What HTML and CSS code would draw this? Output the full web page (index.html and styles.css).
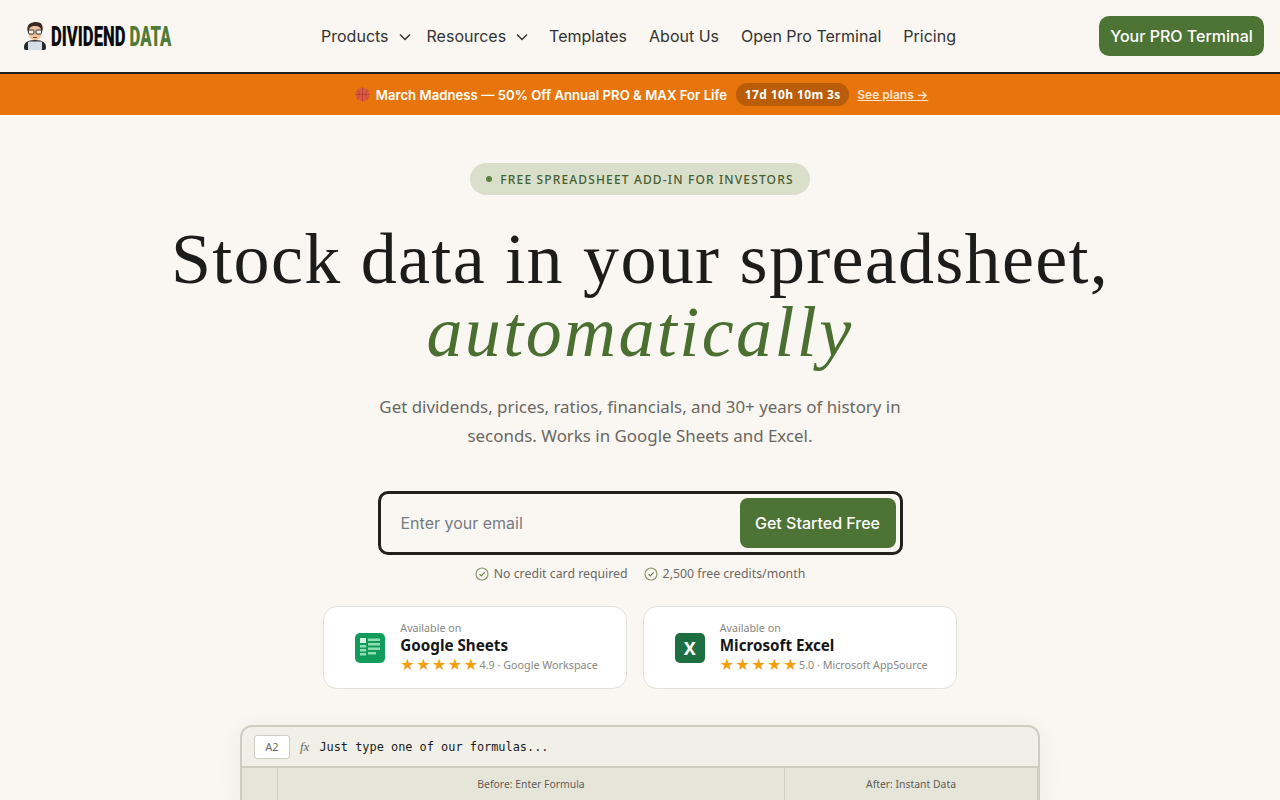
FILE: index.html
```html
<!DOCTYPE html>
<html lang="en">
<head>
    <meta charset="UTF-8">
    <meta name="viewport" content="width=device-width, initial-scale=1.0">
    <title>Dividend Data</title>
    <link rel="stylesheet" href="styles.css">
</head>
<body>
    <header class="site-header">
        <a class="logo" href="#">
            <svg class="logo-mark" viewBox="0 0 22 30" width="22" height="30">
                <path d="M2 29c-2 0-2-1-2-3 0-4 3-7 11-7s11 3 11 7c0 2 0 3-2 3z" fill="#2a2a2a"/>
                <path d="M4 5c1-4 12-6 14-1 1 2 1 5 0 7H4C3 9 3 7 4 5z" fill="#3a2a20"/>
                <path d="M5 9c0-2 2-4 6-4s6 2 6 4v5c0 3-3 5-6 5s-6-2-6-5z" fill="#eec39a"/>
                <rect x="4.5" y="9" width="5.5" height="4" rx="1" fill="#f4f1ea" stroke="#333"/>
                <rect x="12" y="9" width="5.5" height="4" rx="1" fill="#f4f1ea" stroke="#333"/>
                <path d="M9 16.5h4" stroke="#7a4a30"/>
                <rect x="4" y="20.5" width="14" height="8.5" rx="1" fill="#d5dde6"/>
            </svg>
            <span class="logo-text">DIVIDEND <em>DATA</em></span>
        </a>
        <nav class="main-nav">
            <a href="#" class="has-caret">Products
                <svg viewBox="0 0 12 8" width="12" height="8"><path d="M1 1.5l5 5 5-5" fill="none" stroke="#333" stroke-width="1.5"/></svg>
            </a>
            <a href="#" class="has-caret">Resources
                <svg viewBox="0 0 12 8" width="12" height="8"><path d="M1 1.5l5 5 5-5" fill="none" stroke="#333" stroke-width="1.5"/></svg>
            </a>
            <a href="#">Templates</a>
            <a href="#">About Us</a>
            <a href="#">Open Pro Terminal</a>
            <a href="#">Pricing</a>
        </nav>
        <a class="pro-btn" href="#">Your PRO Terminal</a>
    </header>

    <div class="promo-bar">
        <svg class="promo-ball" viewBox="0 0 16 16" width="15" height="15">
            <circle cx="8" cy="8" r="7.5" fill="#dc5a40"/>
            <path d="M.5 8h15M8 .5v15M2.5 3c3 2 3 8 0 10M13.500 3c-3 2-3 8 0 10" fill="none" stroke="#a83a2a" stroke-width=".7"/>
        </svg>
        <span class="promo-text">March Madness — 50% Off Annual PRO &amp; MAX For Life</span>
        <span class="promo-timer">17d 10h 10m 3s</span>
        <a class="promo-link" href="#">See plans →</a>
    </div>

    <main class="hero">
        <div class="eyebrow"><i></i>FREE SPREADSHEET ADD-IN FOR INVESTORS</div>
        <h1>Stock data in your spreadsheet,<br><em>automatically</em></h1>
        <p class="lead">Get dividends, prices, ratios, financials, and 30+ years of history in seconds. Works in Google Sheets and Excel.</p>

        <form class="signup">
            <input type="email" placeholder="Enter your email" autocomplete="off"/>
            <button type="button">Get Started Free</button>
        </form>

        <div class="perks">
            <span>
                <svg viewBox="0 0 14 14" width="14" height="14"><circle cx="7" cy="7" r="6" fill="none" stroke="#8a9a6a" stroke-width="1.2"/><path d="M4.5 7.2l1.8 1.8 3.3-3.6" fill="none" stroke="#6b7d4a" stroke-width="1.2"/></svg>
                No credit card required
            </span>
            <span>
                <svg viewBox="0 0 14 14" width="14" height="14"><circle cx="7" cy="7" r="6" fill="none" stroke="#8a9a6a" stroke-width="1.2"/><path d="M4.5 7.2l1.8 1.8 3.3-3.6" fill="none" stroke="#6b7d4a" stroke-width="1.2"/></svg>
                2,500 free credits/month
            </span>
        </div>

        <div class="platforms">
            <a class="platform sheets" href="#">
                <svg class="platform-icon" viewBox="0 0 30 30" width="30" height="30">
                    <rect width="30" height="30" rx="5" fill="#119c5c"/>
                    <rect x="5" y="5" width="6" height="5" fill="#d8f3e3"/>
                    <path d="M5 12h6v2.5H5zM5 16h6v2.5H5zM5 20h6v2.5H5zM13 5.5h12V8H13zM13 10h12v2.5H13zM13 14.5h12V17H13zM13 19h8v2.5h-8z" fill="#8fdcb3"/>
                </svg>
                <div class="platform-info">
                    <small>Available on</small>
                    <strong>Google Sheets</strong>
                    <div class="rating"><span class="stars">★★★★★</span><span>4.9 · Google Workspace</span></div>
                </div>
            </a>
            <a class="platform excel" href="#">
                <div class="excel-icon">X</div>
                <div class="platform-info">
                    <small>Available on</small>
                    <strong>Microsoft Excel</strong>
                    <div class="rating"><span class="stars">★★★★★</span><span>5.0 · Microsoft AppSource</span></div>
                </div>
            </a>
        </div>

        <div class="sheet-demo">
            <div class="formula-bar">
                <div class="cell-ref">A2</div>
                <span class="fx">fx</span>
                <code>Just type one of our formulas...</code>
            </div>
            <div class="sheet-head">
                <div class="corner"></div>
                <div class="col-before">Before: Enter Formula</div>
                <div class="col-after">After: Instant Data</div>
            </div>
        </div>
    </main>
</body>
</html>
```

FILE: styles.css
```css
* {
    box-sizing: border-box;
}
html, body {
    height: 800px;
    overflow: hidden;
}
body {
    margin: 0;
    background: #faf7f2;
    color: #1c1c1a;
    font-family: Inter, "Noto Sans", sans-serif;
}
a {
    color: inherit;
    text-decoration: none;
}

/* header */
.site-header {
    display: flex;
    justify-content: space-between;
    align-items: center;
    height: 74px;
    padding: 0 16px 0 24px;
    border-bottom: 2px solid #231f1c;
}
.logo {
    display: flex;
    align-items: center;
    gap: 5px;
    width: 154px;
}
.logo-mark {
    flex: none;
}
.logo-text {
    flex: none;
    display: inline-block;
    font-family: Roboto, sans-serif;
    font-size: 28px;
    font-weight: 900;
    white-space: nowrap;
    color: #0c0c0c;
    transform: scaleX(0.595);
    transform-origin: left center;
}
.logo-text em {
    font-style: normal;
    color: #4f7a37;
}
.main-nav {
    display: flex;
    align-items: center;
    gap: 22px;
    font-size: 16px;
    color: #333;
}
.has-caret {
    display: flex;
    align-items: center;
    gap: 10px;
    margin-right: -6px;
}
.has-caret + .has-caret {
    margin-right: -1px;
}
.has-caret svg {
    margin-top: 2px;
}
.pro-btn {
    width: 165px;
    padding: 10px 0;
    border-radius: 10px;
    background: #4d7435;
    color: #fff;
    font-size: 16px;
    font-weight: 500;
    line-height: 20px;
    text-align: center;
}

/* promo */
.promo-bar {
    display: flex;
    justify-content: center;
    align-items: center;
    gap: 8px;
    height: 41px;
    padding-left: 3px;
    background: #e8750b;
    color: #fff;
    font-size: 13.2px;
    font-weight: 600;
}
.promo-ball {
    margin-right: -2px;
}
.promo-text {
    margin-right: 1px;
}
.promo-timer {
    padding: 3px 8.5px;
    border-radius: 12px;
    background: #b95d09;
    font-family: "Noto Sans", sans-serif;
    font-size: 12px;
    font-weight: 700;
    letter-spacing: 0.4px;
}
.promo-link {
    color: #fde4cc;
    text-decoration: underline;
    font-size: 12px;
}

/* hero */
.hero {
    display: flex;
    flex-direction: column;
    align-items: center;
    padding-top: 48px;
}
.eyebrow {
    display: flex;
    align-items: center;
    gap: 8px;
    height: 32px;
    padding: 0 16px;
    border-radius: 16px;
    background: #dadfcc;
    color: #44602f;
    font-family: "Noto Sans", sans-serif;
    font-size: 12px;
    font-weight: 500;
    letter-spacing: 1.15px;
}
.eyebrow i {
    width: 6px;
    height: 6px;
    border-radius: 50%;
    background: #5c8040;
}
h1 {
    margin: 28px 0 0;
    font-family: "Liberation Serif", serif;
    font-size: 72px;
    font-weight: 400;
    letter-spacing: 1.3px;
    line-height: 73px;
    text-align: center;
    color: #1c1c1a;
}
h1 em {
    letter-spacing: 2.4px;
    color: #4a6f30;
}
.lead {
    width: 560px;
    margin: 23px 0 0;
    font-family: "Noto Sans", sans-serif;
    font-size: 16.9px;
    line-height: 29px;
    text-align: center;
    color: #6b6862;
}
.signup {
    display: flex;
    align-items: center;
    width: 525px;
    height: 64px;
    margin-top: 41px;
    padding: 0 4px 0 18px;
    border: 3px solid #231f1c;
    border-radius: 10px;
}
.signup input {
    flex: 1;
    min-width: 0;
    border: 0;
    outline: 0;
    background: transparent;
    font-family: Inter, sans-serif;
    font-size: 16px;
}
.signup input::placeholder {
    color: #757b85;
}
.signup button {
    width: 156px;
    height: 50px;
    border: 0;
    border-radius: 8px;
    background: #4d7435;
    color: #fff;
    font-family: Inter, sans-serif;
    font-size: 16px;
    font-weight: 500;
    cursor: pointer;
}
.perks {
    display: flex;
    gap: 16px;
    margin-top: 10px;
    font-family: "Noto Sans", sans-serif;
    font-size: 12.3px;
    color: #6b6862;
}
.perks span {
    display: flex;
    align-items: center;
    gap: 5px;
}
.platforms {
    display: flex;
    gap: 16px;
    margin-top: 24px;
}
.platform {
    display: flex;
    align-items: center;
    gap: 15px;
    height: 83px;
    padding: 0 28px 0 31px;
    border: 1px solid #e2e0da;
    border-radius: 14px;
    background: #fff;
}
.excel-icon {
    width: 30px;
    height: 30px;
    border-radius: 5px;
    background: #1d6f42;
    color: #fff;
    font-family: "Noto Sans", sans-serif;
    font-size: 18px;
    font-weight: 700;
    line-height: 30px;
    text-align: center;
}
.platform-info {
    display: flex;
    flex-direction: column;
    font-family: "Noto Sans", sans-serif;
}
.platform-info small {
    font-size: 10.7px;
    line-height: 14px;
    color: #8a8781;
}
.platform-info strong {
    font-size: 15.2px;
    font-weight: 700;
    line-height: 20px;
    color: #16161a;
}
.rating {
    display: flex;
    align-items: center;
    font-size: 10.75px;
    line-height: 20px;
    color: #8a8781;
}
.stars {
    font-family: "DejaVu Sans", sans-serif;
    font-size: 16px;
    letter-spacing: 1.5px;
    color: #f59e0b;
}
.sheet-demo {
    width: 800px;
    margin-top: 36px;
    border: 2px solid #cfcdc2;
    border-radius: 12px 12px 0 0;
    background: #f0efe8;
    box-shadow: 0 4px 24px rgba(0, 0, 0, 0.06);
}
.formula-bar {
    display: flex;
    align-items: center;
    height: 41px;
    padding: 0 12px;
    border-bottom: 2px solid #cfcdc2;
}
.cell-ref {
    width: 36px;
    height: 24px;
    border: 1px solid #cfcdc2;
    border-radius: 3px;
    background: #fff;
    font-family: "Noto Sans", sans-serif;
    font-size: 11px;
    line-height: 22px;
    text-align: center;
    color: #6b6862;
}
.fx {
    margin: 0 10px;
    font-family: "Liberation Serif", serif;
    font-size: 13px;
    font-style: italic;
    color: #6b6862;
}
.formula-bar code {
    font-family: "DejaVu Sans Mono", monospace;
    font-size: 11.9px;
    color: #1c1c1a;
}
.sheet-head {
    display: grid;
    grid-template-columns: 36px 507px 1fr;
    height: 32px;
    background: #e6e5da;
    font-family: "Noto Sans", sans-serif;
    font-size: 10.4px;
    line-height: 32px;
    text-align: center;
    color: #5f5c55;
}
.sheet-head > div {
    border-right: 1px solid #cfcdc2;
}
```
